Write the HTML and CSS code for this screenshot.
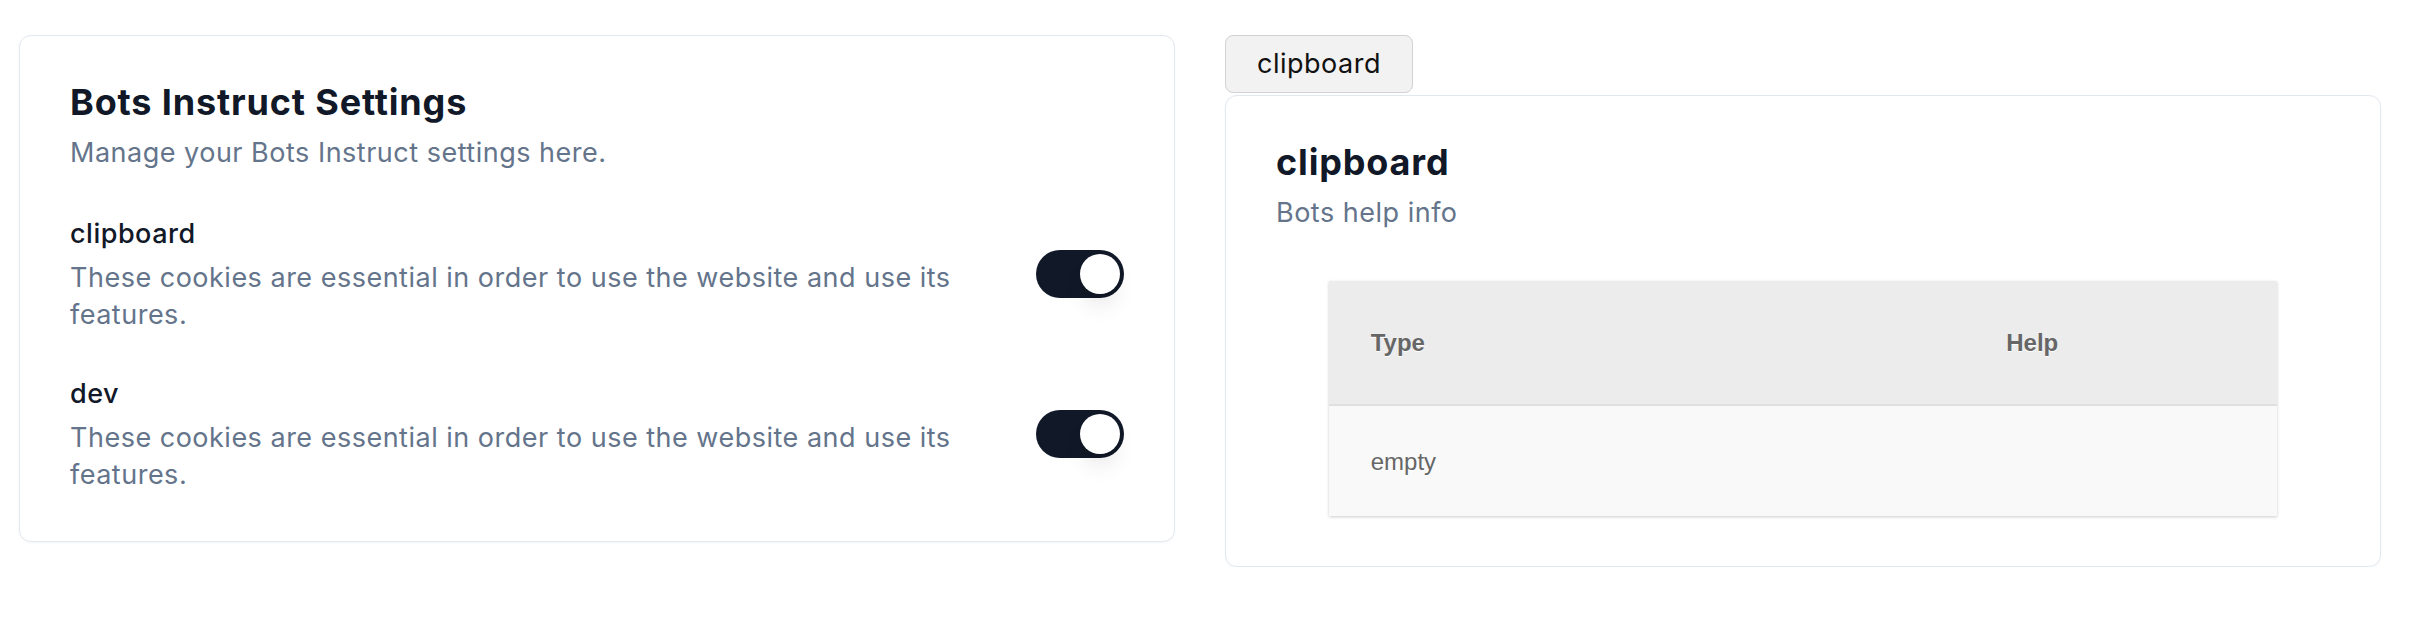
FILE: index.html
```html
<!DOCTYPE html>
<html lang="en">
<head>
<meta charset="utf-8">
<title>Bots Instruct Settings</title>
<link rel="stylesheet" href="styles.css">
</head>
<body>
<div class="page">
  <section class="card settings">
    <header class="card-header">
      <h2 class="card-title">Bots Instruct Settings</h2>
      <p class="card-desc">Manage your Bots Instruct settings here.</p>
    </header>
    <div class="settings-list">
      <div class="setting">
        <div class="setting-text">
          <div class="setting-label">clipboard</div>
          <p class="setting-desc">These cookies are essential in order to use the website and use its features.</p>
        </div>
        <button class="switch" type="button" role="switch" aria-checked="true"><span class="thumb"></span></button>
      </div>
      <div class="setting">
        <div class="setting-text">
          <div class="setting-label">dev</div>
          <p class="setting-desc">These cookies are essential in order to use the website and use its features.</p>
        </div>
        <button class="switch" type="button" role="switch" aria-checked="true"><span class="thumb"></span></button>
      </div>
    </div>
  </section>

  <div class="right-col">
    <div class="tabs"><button class="tab" type="button">clipboard</button></div>
    <section class="card help">
      <header class="card-header">
        <h2 class="card-title">clipboard</h2>
        <p class="card-desc">Bots help info</p>
      </header>
      <table class="help-table">
        <thead>
          <tr><th class="col-type">Type</th><th>Help</th></tr>
        </thead>
        <tbody>
          <tr><td>empty</td><td></td></tr>
        </tbody>
      </table>
    </section>
  </div>
</div>
</body>
</html>
```
FILE: styles.css
```css
* { box-sizing: border-box; }
html, body { margin: 0; padding: 0; background: #ffffff; }
body {
  font-family: Inter, "Noto Sans", "Liberation Sans", sans-serif;
  color: #111827;
  letter-spacing: 0.5px;
}
.page {
  display: grid;
  grid-template-columns: 1fr 1fr;
  column-gap: 50px;
  align-items: start;
  padding: 35px 33px 0 19px;
}
.card {
  background: #ffffff;
  border: 1px solid #e2e8f0;
  border-radius: 12px;
  padding: 48px 50px;
  box-shadow: 0 1px 3px rgba(15, 23, 42, 0.04);
}
.card.help { padding-bottom: 50px; }
.card-header { display: flex; flex-direction: column; }
.card-title {
  margin: 0;
  font-size: 36px;
  line-height: 36px;
  font-weight: 700;
  letter-spacing: 0.85px;
  color: #111827;
}
.card-desc {
  margin: 13px 0 0;
  font-size: 27px;
  line-height: 40px;
  color: #64748b;
}
.settings-list {
  display: flex;
  flex-direction: column;
  gap: 41px;
  margin-top: 41px;
}
.setting {
  display: flex;
  align-items: center;
  justify-content: space-between;
  gap: 40px;
}
.setting-text { flex: 1; min-width: 0; max-width: 960px; }
.setting-label {
  font-size: 27px;
  line-height: 40px;
  font-weight: 500;
  color: #111827;
}
.setting-desc {
  margin: 5px 0 0;
  font-size: 27px;
  line-height: 37px;
  color: #64748b;
}
.switch {
  flex: none;
  width: 88px;
  height: 48px;
  padding: 0;
  border: 4px solid transparent;
  border-radius: 999px;
  background: #111827;
  display: flex;
  align-items: center;
  cursor: pointer;
}
.thumb {
  display: block;
  width: 40px;
  height: 40px;
  border-radius: 50%;
  background: #ffffff;
  transform: translateX(40px);
  box-shadow: 0 15px 22px -4px rgba(0, 0, 0, 0.1), 0 6px 9px -6px rgba(0, 0, 0, 0.1);
}
.right-col { display: flex; flex-direction: column; align-items: flex-start; }
.right-col .card { align-self: stretch; }
.tabs { display: flex; margin-bottom: 2px; }
.tab {
  font-family: Inter, "Noto Sans", "Liberation Sans", sans-serif;
  font-size: 27px;
  line-height: 40px;
  letter-spacing: 0.5px;
  padding: 8px 31px;
  color: #111111;
  background: #f2f2f2;
  border: 1px solid #d1d1d6;
  border-radius: 8px;
  cursor: pointer;
}
.help-table {
  width: 90%;
  margin: 48px auto 0;
  border-collapse: collapse;
  font-family: "Liberation Sans", Arial, sans-serif;
  font-size: 24px;
  letter-spacing: 0;
  color: #666666;
  box-shadow: 0 1px 3px rgba(0, 0, 0, 0.2);
}
.help-table th {
  text-align: left;
  font-weight: 700;
  background: #ececec;
  color: #666666;
  text-shadow: 0 1px 0 #ffffff;
  padding: 48px 42px 47px;
  border-bottom: 2px solid #e0e0e0;
}
.help-table th.col-type { width: 67%; }
.help-table td {
  background: #f9f9f9;
  padding: 42px 42px 40px;
  text-shadow: 0 1px 0 #ffffff;
}
```
